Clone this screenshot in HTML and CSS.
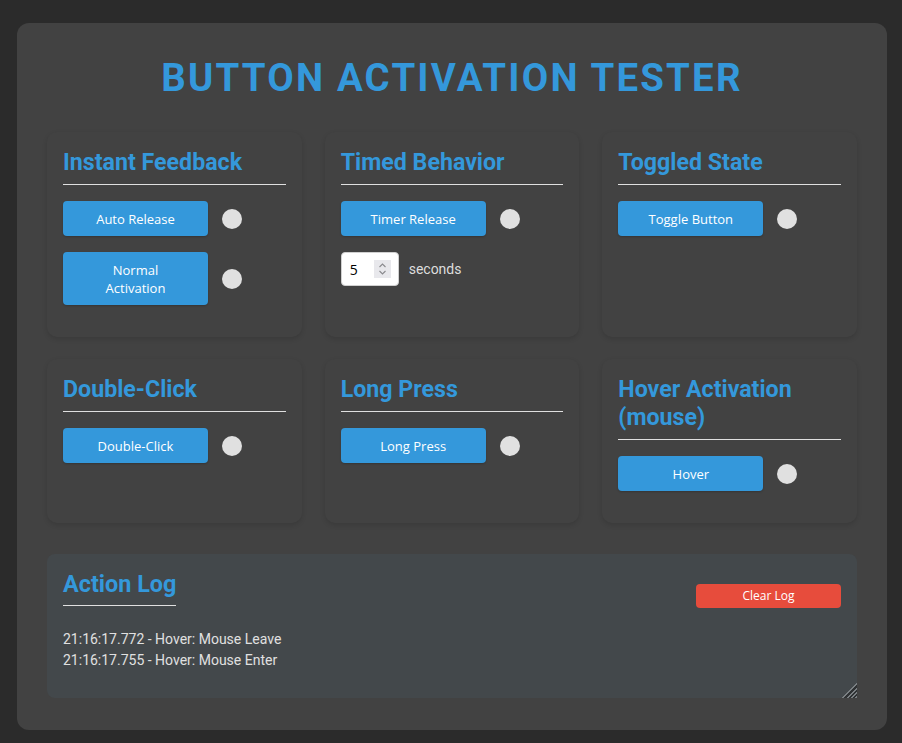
FILE: index.html
```html
<!DOCTYPE html>
<html lang="en">
<head>
<meta charset="utf-8">
<title>Button Activation Tester</title>
<link rel="stylesheet" href="styles.css">
</head>
<body>
<div class="container">
  <h1 class="title">BUTTON ACTIVATION TESTER</h1>
  <div class="grid">
    <section class="card">
      <h3 class="card-title">Instant Feedback</h3>
      <div class="row"><button class="btn">Auto Release</button><span class="dot"></span></div>
      <div class="row"><button class="btn">Normal Activation</button><span class="dot"></span></div>
    </section>
    <section class="card">
      <h3 class="card-title">Timed Behavior</h3>
      <div class="row"><button class="btn">Timer Release</button><span class="dot"></span></div>
      <div class="row">
        <div class="num">
          <span class="num-val">5</span>
          <span class="spin">
            <svg width="17" height="18" viewBox="0 0 17 18"><path d="M5.5 7 L8.5 4 L11.5 7" fill="none" stroke="#8a8a8e" stroke-width="1.1"/><path d="M5.5 11 L8.5 14 L11.5 11" fill="none" stroke="#8a8a8e" stroke-width="1.1"/></svg>
          </span>
        </div>
        <span class="unit">seconds</span>
      </div>
    </section>
    <section class="card">
      <h3 class="card-title">Toggled State</h3>
      <div class="row"><button class="btn">Toggle Button</button><span class="dot"></span></div>
    </section>
    <section class="card">
      <h3 class="card-title">Double-Click</h3>
      <div class="row"><button class="btn">Double-Click</button><span class="dot"></span></div>
    </section>
    <section class="card">
      <h3 class="card-title">Long Press</h3>
      <div class="row"><button class="btn">Long Press</button><span class="dot"></span></div>
    </section>
    <section class="card">
      <h3 class="card-title">Hover Activation (mouse)</h3>
      <div class="row"><button class="btn">Hover</button><span class="dot"></span></div>
    </section>
  </div>
  <section class="log">
    <div class="log-head">
      <h2 class="log-title">Action Log</h2>
      <button class="clear">Clear Log</button>
    </div>
    <div class="entries">
      <div class="entry">21:16:17.772 - Hover: Mouse Leave</div>
      <div class="entry">21:16:17.755 - Hover: Mouse Enter</div>
    </div>
  </section>
</div>
</body>
</html>
```
FILE: styles.css
```css
html, body {
  margin: 0;
  padding: 0;
}
body {
  background: #2b2b2b;
  font-family: Roboto, "Liberation Sans", sans-serif;
  color: #e0e0e0;
}
.container {
  width: 870px;
  box-sizing: border-box;
  margin: 23px 0 0 17px;
  padding: 30px 30px 32px;
  background: #424242;
  border-radius: 12px;
}
.title {
  margin: 2px 0 32px;
  text-align: center;
  font-size: 38.4px;
  font-weight: 700;
  letter-spacing: 2.2px;
  color: #3498db;
  line-height: 45px;
}
.grid {
  display: grid;
  grid-template-columns: repeat(3, 1fr);
  column-gap: 23px;
  row-gap: 22px;
  margin-bottom: 31px;
}
.card {
  background: #424242;
  border-radius: 10px;
  padding: 16px;
  box-shadow: 0 2px 5px rgba(0, 0, 0, 0.13);
}
.card-title {
  margin: 0 0 16px;
  padding-bottom: 8px;
  border-bottom: 1px solid #e0e0e0;
  font-size: 23.2px;
  line-height: 28px;
  font-weight: 700;
  color: #3498db;
}
.row {
  display: flex;
  align-items: center;
  margin-bottom: 16px;
}
.btn {
  width: 145px;
  padding: 8.5px 20px;
  border: none;
  border-radius: 4px;
  background: #3498db;
  color: #fff;
  font-family: "Open Sans", "Liberation Sans", sans-serif;
  font-size: 13px;
  line-height: 18px;
  box-shadow: 0 1px 2px rgba(0, 0, 0, 0.2);
}
.dot {
  width: 20px;
  height: 20px;
  border-radius: 50%;
  background: #e0e0e0;
  margin-left: 14px;
}
.num {
  width: 58px;
  height: 34px;
  box-sizing: border-box;
  background: #fff;
  border: 1px solid #d0d0d0;
  border-radius: 4px;
  display: flex;
  align-items: center;
  padding-left: 8px;
}
.num-val {
  flex: 1;
  color: #000;
  font-family: "Open Sans", "Liberation Sans", sans-serif;
  font-size: 14px;
}
.spin {
  width: 17px;
  height: 18px;
  background: #e8e8ec;
  margin-right: 7px;
  display: flex;
}
.unit {
  margin-left: 10px;
  font-size: 14px;
  color: #ddd;
}
.log {
  height: 144px;
  box-sizing: border-box;
  background: #43484b;
  border-radius: 8px;
  padding: 15px 16px 15px;
  overflow: auto;
  resize: vertical;
}
.log::-webkit-resizer {
  background:
    linear-gradient(to bottom right, #43484b 50%, transparent 50%),
    repeating-linear-gradient(135deg, #2e3133 0 1.5px, #7a7f82 1.5px 3px);
}
.log-head {
  display: flex;
  justify-content: space-between;
  align-items: center;
}
.log-title {
  margin: 0 0 16px;
  padding-bottom: 6px;
  border-bottom: 1px solid #e0e0e0;
  font-size: 23.4px;
  line-height: 30px;
  font-weight: 700;
  color: #3498db;
}
.clear {
  width: 145px;
  height: 24px;
  border: none;
  border-radius: 4px;
  background: #e74c3c;
  color: #fff;
  font-family: "Open Sans", "Liberation Sans", sans-serif;
  font-size: 12px;
  padding: 0;
}
.entries {
  margin-top: 7px;
}
.entry {
  font-size: 14px;
  line-height: 21px;
  color: #e0e0e0;
}
```
